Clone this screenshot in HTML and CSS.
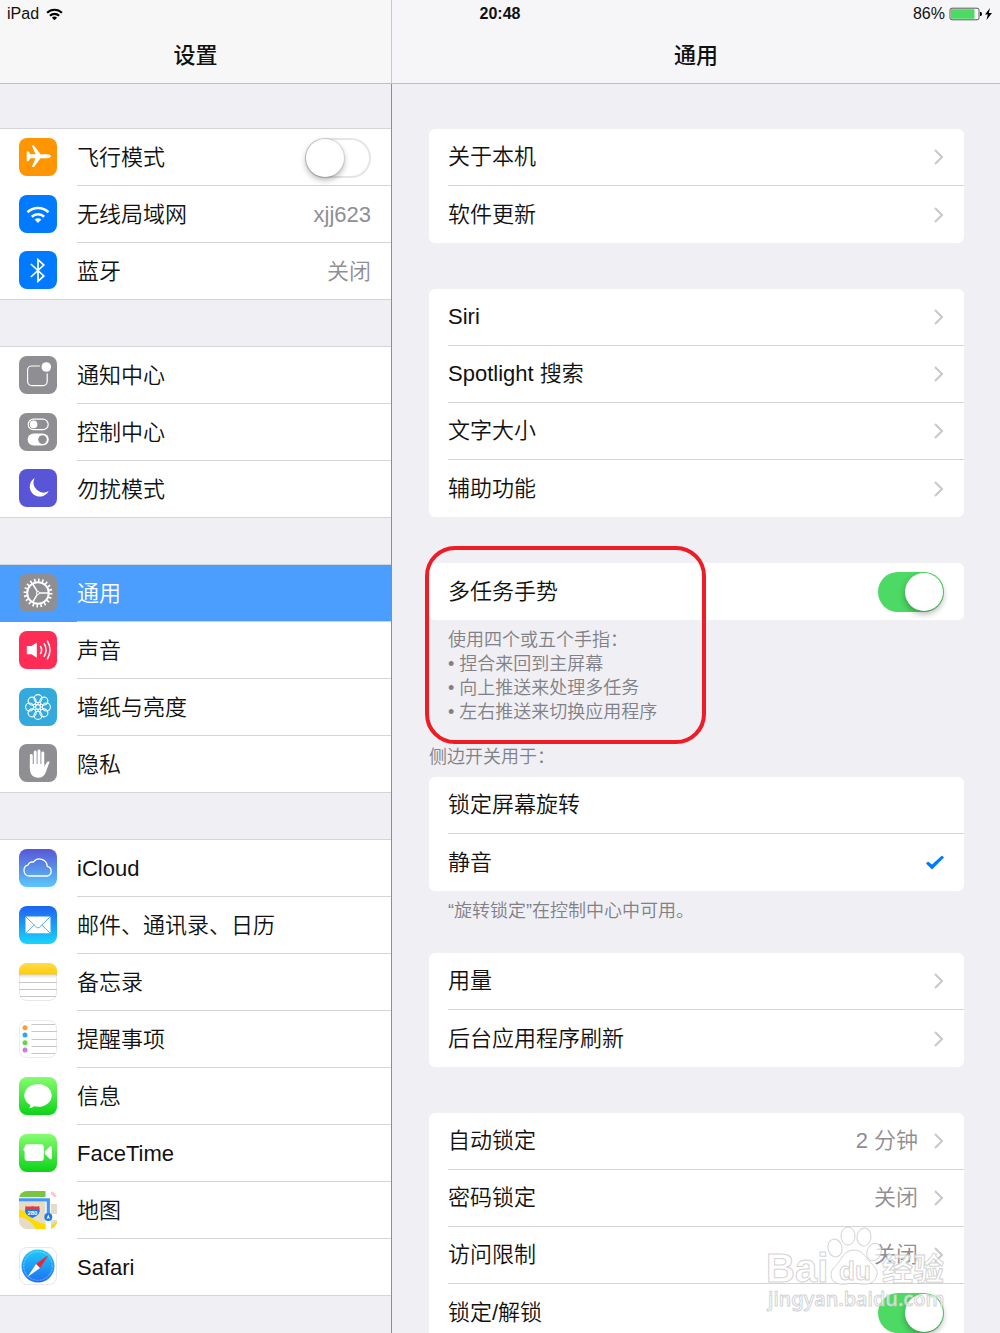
FILE: index.html
```html
<!DOCTYPE html>
<html lang="zh-CN">
<head>
<meta charset="utf-8">
<meta name="viewport" content="width=device-width, initial-scale=1">
<title>设置</title>
<link rel="stylesheet" href="styles.css">
</head>
<body>
<div class="app">
  <div class="status">
    <span class="carrier">iPad
      <svg class="status-wifi" viewBox="0 0 16 12" fill="none" stroke="#000" stroke-width="2"><path d="M1 4.4a10 10 0 0 1 14 0M3.700 7.200a6.100 6.100 0 0 1 8.600 0"/><path d="M5.600 9.100a3.500 3.500 0 0 1 4.800 0L8 11.500z" fill="#000" stroke="none"/></svg>
    </span>
    <time class="clock">20:48</time>
    <span class="power">86%
      <svg class="battery" viewBox="0 0 44 14"><rect x="1" y="1.200" width="29" height="11.600" rx="2" fill="#fff" stroke="#555"/><rect x="2" y="2.200" width="23.500" height="9.600" fill="#4cd964"/><path d="M31 5h.6q1.400 0 1.400 2t-1.400 2H31z"/><path d="M41 1L36 7.600h2.800L37.500 13 43 6h-3.200z"/></svg>
    </span>
  </div>

  <nav class="pane sidebar">
    <header class="bar"><h1>设置</h1></header>
    <div class="scroll">
      <section class="group">
        <label class="item">
          <svg class="icon" viewBox="0 0 38 38"><rect width="38" height="38" rx="8" fill="#ff9500"/><path d="M32 18.300c0 1.300-2 2-4 2h-6.500L15 29h-2.200l3.700-8.700h-5l-2 2.900H7.700v-9.800h1.800l2 2.900h5L12.800 7.600H15l6.500 8.700H28c2 0 4 .7 4 2z" fill="#fff"/></svg>
          <span class="cell"><span class="name">飞行模式</span><input class="switch" type="checkbox"></span>
        </label>
        <a class="item" href="#wifi">
          <svg class="icon" viewBox="0 0 38 38"><rect width="38" height="38" rx="8" fill="#007aff"/><path d="M8.500 17.300a15 15 0 0 1 21 0M12.800 21.800a9 9 0 0 1 12.400 0" fill="none" stroke="#fff" stroke-width="2.600"/><path d="M15.600 24.600q3.400-2.600 6.800 0L19 28z" fill="#fff"/></svg>
          <span class="cell"><span class="name">无线局域网</span><span class="value">xjj623</span></span>
        </a>
        <a class="item" href="#bluetooth">
          <svg class="icon" viewBox="0 0 38 38"><rect width="38" height="38" rx="8" fill="#007aff"/><path d="M11.800 13L24.800 25 19 30.300V8.700L24.800 14l-13 12" fill="none" stroke="#fff" stroke-width="1.700"/></svg>
          <span class="cell"><span class="name">蓝牙</span><span class="value">关闭</span></span>
        </a>
      </section>

      <section class="group">
        <a class="item" href="#notifications">
          <svg class="icon" viewBox="0 0 38 38"><rect width="38" height="38" rx="8" fill="#8e8e93"/><rect x="8.600" y="10" width="19.600" height="19.600" rx="4" fill="none" stroke="#fff" stroke-width="1.200"/><circle cx="27.300" cy="11" r="6.600" fill="#8e8e93"/><circle cx="27.300" cy="11" r="4.800" fill="#fff"/></svg>
          <span class="cell"><span class="name">通知中心</span></span>
        </a>
        <a class="item" href="#control">
          <svg class="icon" viewBox="0 0 38 38"><rect width="38" height="38" rx="8" fill="#8e8e93"/><rect x="9.200" y="6.200" width="20" height="10.400" rx="5.200" fill="none" stroke="#fff" stroke-width="1.200"/><circle cx="14.600" cy="11.400" r="3.800" fill="#fff"/><rect x="8.600" y="20.600" width="21.200" height="12" rx="6" fill="#fff"/><circle cx="23.500" cy="26.600" r="4.300" fill="#8e8e93"/></svg>
          <span class="cell"><span class="name">控制中心</span></span>
        </a>
        <a class="item" href="#dnd">
          <svg class="icon" viewBox="0 0 38 38"><rect width="38" height="38" rx="8" fill="#5856d6"/><path d="M15.600 9A10 10 0 1 0 29.700 22 10 10 0 0 1 15.600 9z" fill="#fff"/></svg>
          <span class="cell"><span class="name">勿扰模式</span></span>
        </a>
      </section>

      <section class="group">
        <a class="item selected" href="#general" aria-current="page">
          <svg class="icon" viewBox="0 0 38 38"><rect width="38" height="38" rx="8" fill="#8e8e93"/><g fill="none" stroke="#fff"><circle cx="19" cy="19" r="12.800" stroke-width="3.200" pathLength="60" stroke-dasharray="1.200 1.800"/><circle cx="19" cy="19" r="10.800" stroke-width="2"/><path d="M20.500 19H30M18.300 17.700l-4.800-8.200M18.300 20.300l-4.800 8.200" stroke-width="1.500"/><circle cx="19" cy="19" r="1.500" stroke-width="1"/></g></svg>
          <span class="cell"><span class="name">通用</span></span>
        </a>
        <a class="item" href="#sounds">
          <svg class="icon" viewBox="0 0 38 38"><rect width="38" height="38" rx="8" fill="#ff2d55"/><path d="M7.800 15h4.700l5.300-3.500v15.200L12.500 23.200H7.800z" fill="#fff"/><path d="M21.300 15q2.600 4 0 8M24.900 12.200q4.400 6.900 0 13.700M28.200 9.700q5.600 9.400 0 18.700" fill="none" stroke="#fff" stroke-width="1.500"/></svg>
          <span class="cell"><span class="name">声音</span></span>
        </a>
        <a class="item" href="#wallpaper">
          <svg class="icon" viewBox="0 0 38 38"><rect width="38" height="38" rx="8" fill="#34aadc"/><g fill="none" stroke="#fff" stroke-width="1.100"><circle cx="19" cy="10.600" r="4"/><circle cx="24.900" cy="13.100" r="4"/><circle cx="27.400" cy="19" r="4"/><circle cx="24.900" cy="24.900" r="4"/><circle cx="19" cy="27.400" r="4"/><circle cx="13.100" cy="24.900" r="4"/><circle cx="10.600" cy="19" r="4"/><circle cx="13.100" cy="13.100" r="4"/><circle cx="19" cy="19" r="2.400"/><path d="M19 14.600v2M19 21.400v2M14.600 19h2M21.400 19h2M15.900 15.900l1.400 1.400M20.700 20.700l1.400 1.400M15.900 22.100l1.400-1.400M20.700 17.300l1.400-1.400"/></g></svg>
          <span class="cell"><span class="name">墙纸与亮度</span></span>
        </a>
        <a class="item" href="#privacy">
          <svg class="icon" viewBox="0 0 38 38"><rect width="38" height="38" rx="8" fill="#8e8e93"/><path d="M12.300 11.500V24M16.200 8V21M20 7v14M23.800 9v13" stroke="#fff" stroke-width="2.900" stroke-linecap="round"/><path d="M10.900 20h14.300v2.500l2.300-3.600c1-1.500 2.400-1.600 3.200-.9-1.500 2.600-2.300 6.500-4 10.500-1.400 3.500-3.900 5.200-7.600 5.200-5.200 0-8.200-3.500-8.200-8.700z" fill="#fff"/></svg>
          <span class="cell"><span class="name">隐私</span></span>
        </a>
      </section>

      <section class="group">
        <a class="item" href="#icloud">
          <svg class="icon" viewBox="0 0 38 38"><defs><linearGradient id="g-cloud" x2="0" y2="1"><stop stop-color="#5856d6"/><stop offset="1" stop-color="#5ac8fa"/></linearGradient></defs><rect width="38" height="38" rx="8" fill="url(#g-cloud)"/><path d="M10.500 27a5.700 5.700 0 0 1-1.300-11.200 4 4 0 0 1 5.100-2.600 7.700 7.700 0 0 1 13.900 4.100A5 5 0 0 1 28.500 27z" fill="none" stroke="#fff" stroke-width="1.300"/></svg>
          <span class="cell"><span class="name">iCloud</span></span>
        </a>
        <a class="item" href="#mail">
          <svg class="icon" viewBox="0 0 38 38"><defs><linearGradient id="g-mail" x2="0" y2="1"><stop stop-color="#1d62f0"/><stop offset="1" stop-color="#19d5fd"/></linearGradient></defs><rect width="38" height="38" rx="8" fill="url(#g-mail)"/><rect x="6.500" y="10.600" width="25" height="16.600" rx="1" fill="#fff"/><path d="M7 11l10.500 10.300q1.500 1.300 3 0L31 11M7 27l8.200-8M31 27l-8.200-8" fill="none" stroke="#4aa5f5" stroke-width=".9"/></svg>
          <span class="cell"><span class="name">邮件、通讯录、日历</span></span>
        </a>
        <a class="item" href="#notes">
          <svg class="icon" viewBox="0 0 38 38"><defs><linearGradient id="g-notes" x2="0" y2="1"><stop stop-color="#ffdb4c"/><stop offset="1" stop-color="#ffcd02"/></linearGradient></defs><rect x=".5" y=".5" width="37" height="37" rx="7.500" fill="#fff" stroke="#e8e8e8"/><path d="M0 11.500V8a8 8 0 0 1 8-8h22a8 8 0 0 1 8 8v3.500z" fill="url(#g-notes)"/><path d="M0 11.500h38v1H0z" fill="#c9b98a"/><path d="M.5 12.500h37v2H.5z" fill="#eee"/><path d="M0 19.500h38M0 26.500h38M1 33.500h36" stroke="#c7c7c7"/></svg>
          <span class="cell"><span class="name">备忘录</span></span>
        </a>
        <a class="item" href="#reminders">
          <svg class="icon" viewBox="0 0 38 38"><rect x=".5" y=".5" width="37" height="37" rx="7.500" fill="#fff" stroke="#ebebeb"/><path d="M12.500 4.500H36M12.500 11.500H38M12.500 19.500H38M12.500 26.500H38M12.500 33.500H36" stroke="#c7c7c7"/><circle cx="6" cy="7.700" r="2.500" fill="#ff9d2a"/><circle cx="6" cy="15" r="2.500" fill="#2ea9ee"/><circle cx="6" cy="22.700" r="2.500" fill="#62d944"/><circle cx="6" cy="29.900" r="2.500" fill="#cb7be6"/></svg>
          <span class="cell"><span class="name">提醒事项</span></span>
        </a>
        <a class="item" href="#messages">
          <svg class="icon" viewBox="0 0 38 38"><defs><linearGradient id="g-green" x2="0" y2="1"><stop stop-color="#87fc70"/><stop offset="1" stop-color="#0bd318"/></linearGradient></defs><rect width="38" height="38" rx="8" fill="url(#g-green)"/><path d="M19 7c7.600 0 13.700 5 13.700 11.400S26.600 29.800 19 29.800c-1.400 0-2.800-.2-4-.5-1.300 1.200-3 1.900-5.200 2 1-.8 1.500-1.900 1.600-3.300-3.700-2-6.100-5.500-6.100-9.600C5.300 12 11.400 7 19 7z" fill="#fff"/></svg>
          <span class="cell"><span class="name">信息</span></span>
        </a>
        <a class="item" href="#facetime">
          <svg class="icon" viewBox="0 0 38 38"><rect width="38" height="38" rx="8" fill="url(#g-green)"/><rect x="5.600" y="10.300" width="19.200" height="16.700" rx="3" fill="#fff"/><path d="M25.800 17.600l5-5q2-1 2 .8v10.800q0 1.800-2 .8l-5-5z" fill="#fff"/><rect x="4.500" y="14" width="2" height="3" rx="1" fill="#fff"/></svg>
          <span class="cell"><span class="name">FaceTime</span></span>
        </a>
        <a class="item" href="#maps">
          <svg class="icon" viewBox="0 0 38 38"><defs><clipPath id="c-map"><rect width="38" height="38" rx="8"/></clipPath></defs><g clip-path="url(#c-map)"><path d="M0 0h38v38H0z" fill="#fff"/><path d="M0 0h26.500v6H0z" fill="#76c63f"/><path d="M32 0h6v6h-3l-3-3z" fill="#f8c5d3"/><path d="M0 11h26.500v27H0zM32 13h6v10h-6zM32 29h6v9h-6z" fill="#e5dcc8"/><path d="M0 19q7 0 11 6t15.500 8v5H17Q9 26 0 26z" fill="#ffdb00"/><path d="M32 35l6-5v4l-6 4z" fill="#ffdb00"/><path d="M0 8.800h29.300v17" fill="none" stroke="#4196ff" stroke-width="3.200"/><circle cx="29.300" cy="26" r="4" fill="#1a7cec"/><path d="M29.300 23.200l1.700 4.800-1.700-1-1.700 1z" fill="#fff"/><path d="M6.500 16.500h13.800q2.500 7-6.900 10.500-9.400-3.500-6.900-10.500z" fill="#1a7cec"/><path d="M6.500 18v-3q3.500 1.200 6.900 0 3.400 1.200 6.900 0v3z" fill="#e33b3d"/><text x="13.400" y="23.600" class="route">280</text></g></svg>
          <span class="cell"><span class="name">地图</span></span>
        </a>
        <a class="item" href="#safari">
          <svg class="icon" viewBox="0 0 38 38"><defs><linearGradient id="g-safari" x2="0" y2="1"><stop stop-color="#1fcbfb"/><stop offset="1" stop-color="#1d6ff1"/></linearGradient></defs><rect x=".5" y=".5" width="37" height="37" rx="7.500" fill="#fff" stroke="#e8e8e8"/><circle cx="19" cy="19" r="16.500" fill="url(#g-safari)"/><circle cx="19" cy="19" r="14.300" fill="none" stroke="#fff" stroke-opacity=".5" stroke-width="1.300" stroke-dasharray=".6 .9"/><path d="M29.500 8L17 17l4 4z" fill="#f5222d"/><path d="M8.500 30L17 17l4 4z" fill="#fff"/></svg>
          <span class="cell"><span class="name">Safari</span></span>
        </a>
      </section>
    </div>
  </nav>

  <main class="pane detail">
    <header class="bar"><h2>通用</h2></header>
    <div class="scroll">
      <section class="card">
        <a class="row" href="#about"><span class="name">关于本机</span><svg class="chevron" viewBox="0 0 11 18"><path d="M2 2l7 7-7 7"/></svg></a>
        <a class="row" href="#update"><span class="name">软件更新</span><svg class="chevron" viewBox="0 0 11 18"><path d="M2 2l7 7-7 7"/></svg></a>
      </section>

      <section class="card">
        <a class="row" href="#siri"><span class="name">Siri</span><svg class="chevron" viewBox="0 0 11 18"><path d="M2 2l7 7-7 7"/></svg></a>
        <a class="row" href="#spotlight"><span class="name">Spotlight 搜索</span><svg class="chevron" viewBox="0 0 11 18"><path d="M2 2l7 7-7 7"/></svg></a>
        <a class="row" href="#text"><span class="name">文字大小</span><svg class="chevron" viewBox="0 0 11 18"><path d="M2 2l7 7-7 7"/></svg></a>
        <a class="row" href="#accessibility"><span class="name">辅助功能</span><svg class="chevron" viewBox="0 0 11 18"><path d="M2 2l7 7-7 7"/></svg></a>
      </section>

      <div class="gestures">
        <section class="card">
          <label class="row"><span class="name">多任务手势</span><input class="switch" type="checkbox" checked></label>
        </section>
        <div class="note">
          <p>使用四个或五个手指：</p>
          <ul>
            <li>捏合来回到主屏幕</li>
            <li>向上推送来处理多任务</li>
            <li>左右推送来切换应用程序</li>
          </ul>
        </div>
        <div class="highlight"></div>
      </div>

      <fieldset class="side-switch">
        <legend>侧边开关用于：</legend>
        <div class="card">
          <label class="row"><span class="name">锁定屏幕旋转</span><input class="tick" type="radio" name="side"></label>
          <label class="row"><span class="name">静音</span><input class="tick" type="radio" name="side" checked></label>
        </div>
        <p class="note">“旋转锁定”在控制中心中可用。</p>
      </fieldset>

      <section class="card">
        <a class="row" href="#usage"><span class="name">用量</span><svg class="chevron" viewBox="0 0 11 18"><path d="M2 2l7 7-7 7"/></svg></a>
        <a class="row" href="#refresh"><span class="name">后台应用程序刷新</span><svg class="chevron" viewBox="0 0 11 18"><path d="M2 2l7 7-7 7"/></svg></a>
      </section>

      <section class="card">
        <a class="row" href="#autolock"><span class="name">自动锁定</span><span class="value">2 分钟</span><svg class="chevron" viewBox="0 0 11 18"><path d="M2 2l7 7-7 7"/></svg></a>
        <a class="row" href="#passcode"><span class="name">密码锁定</span><span class="value">关闭</span><svg class="chevron" viewBox="0 0 11 18"><path d="M2 2l7 7-7 7"/></svg></a>
        <a class="row" href="#restrictions"><span class="name">访问限制</span><span class="value">关闭</span><svg class="chevron" viewBox="0 0 11 18"><path d="M2 2l7 7-7 7"/></svg></a>
        <label class="row"><span class="name">锁定/解锁</span><input class="switch" type="checkbox" checked></label>
      </section>
    </div>
  </main>

  <svg class="watermark" viewBox="0 0 184 92">
    <g class="mark">
      <text x="2" y="57" class="mark-logo">Bai</text>
      <ellipse cx="71" cy="23" rx="7" ry="9" transform="rotate(-12 71 23)"/>
      <ellipse cx="84" cy="11" rx="7" ry="9"/>
      <ellipse cx="100" cy="12" rx="7" ry="9" transform="rotate(8 100 12)"/>
      <ellipse cx="110" cy="27" rx="7" ry="9" transform="rotate(20 110 27)"/>
      <path d="M90 25c8 0 11 6 16 12 5 5 8 8 7 13-2 8-9 10-15 9-5-1-11-1-16 0-7 1-15-1-15-9 0-6 5-9 8-13 4-6 7-12 15-12z"/>
      <text x="75" y="55" class="mark-du">du</text>
      <text x="118" y="55" class="mark-cjk">经验</text>
      <text x="4" y="81" class="mark-url">jingyan.baidu.com</text>
    </g>
  </svg>
</div>
</body>
</html>
```
FILE: styles.css
```css
* {
  box-sizing: border-box;
}

body {
  margin: 0;
  background: #efeff4;
  color: #111;
  font-family: "Liberation Sans", "Noto Sans CJK SC", sans-serif;
  font-size: 22px;
  font-weight: 350;
  line-height: 32px;
}

h1, h2, p, ul, fieldset {
  margin: 0;
  padding: 0;
  border: 0;
}

a {
  color: inherit;
  text-decoration: none;
}

.app {
  position: relative;
  display: grid;
  grid-template-columns: 392px 1fr;
  height: 100vh;
  overflow: hidden;
}

/* status bar floats over both panes */
.status {
  position: absolute;
  inset: 0 0 auto;
  display: grid;
  grid-template-columns: 1fr auto 1fr;
  align-items: center;
  padding: 0 7px;
  font-size: 16px;
  line-height: 28px;
}

.carrier,
.power {
  display: flex;
  align-items: center;
  gap: 7px;
}

.power {
  justify-content: flex-end;
  gap: 4px;
}

.clock {
  font-weight: 700;
}

.status-wifi {
  width: 17px;
  height: 13px;
}

.battery {
  width: 44px;
  height: 14px;
}

.pane {
  display: flex;
  flex-direction: column;
  min-width: 0;
  min-height: 0;
}

.bar {
  flex: none;
  padding: 40px 0 11px;
  border-bottom: 1px solid #bfbfc2;
  background: #f7f7f7;
  text-align: center;
}

.detail .bar {
  background: #f6f6f8;
}

.bar h1,
.bar h2 {
  font-size: 22px;
  font-weight: 500;
}

.scroll {
  display: flex;
  flex: 1;
  flex-direction: column;
  gap: 46px;
  min-height: 0;
  padding: 44px 0;
  overflow-y: auto;
  scrollbar-width: none;
}

.sidebar .bar {
  border-right: 1px solid #c8c8ca;
}

.sidebar .scroll {
  border-right: 1px solid #8e8e92;
}

.detail .scroll {
  padding: 45px 36px 45px 37px;
}

.scroll > * {
  flex: none;
}

.group {
  border-top: 1px solid #d4d4d8;
  background: #fff;
}

.item {
  display: flex;
  align-items: center;
  gap: 20px;
  height: 57px;
  padding-left: 19px;
}

.item:last-child {
  border-bottom: 1px solid #d4d4d8;
}

.icon {
  flex: none;
  width: 38px;
  height: 38px;
  margin-bottom: 2px;
}

.cell {
  display: flex;
  flex: 1;
  align-items: center;
  align-self: stretch;
  padding: 1px 20px 0 0;
  border-bottom: 1px solid #d4d4d8;
}

.item:last-child .cell {
  border-bottom: 0;
}

.selected {
  background: #4b9efd;
  color: #fff;
}

.name {
  flex: 1;
}

.value {
  color: #8e8e93;
}

.route {
  fill: #fff;
  font-size: 6px;
  font-weight: 700;
  text-anchor: middle;
}

.card {
  border-radius: 6px;
  background: #fff;
}

.row {
  display: flex;
  align-items: center;
  gap: 15px;
  height: 57px;
  margin-left: 19px;
  padding-right: 20px;
  border-bottom: 1px solid #d4d4d8;
}

.row:last-child {
  border-bottom: 0;
}

.chevron {
  width: 11px;
  height: 18px;
  fill: none;
  stroke: #c7c7cc;
  stroke-width: 2;
}

.switch {
  flex: none;
  width: 66px;
  height: 40px;
  margin: 0;
  padding: 1px;
  border-radius: 20px;
  background: #fff;
  box-shadow: inset 0 0 0 2px #e5e5e5;
  appearance: none;
}

.switch::before {
  display: block;
  width: 38px;
  height: 38px;
  border-radius: 50%;
  background: #fff;
  box-shadow: 0 0 1px 1px rgba(0, 0, 0, 0.1), 0 3px 6px rgba(0, 0, 0, 0.3);
  content: "";
}

.switch:checked {
  background: #4cd964;
  box-shadow: none;
}

.switch:checked::before {
  margin-left: auto;
  box-shadow: 0 3px 6px rgba(0, 0, 0, 0.3);
}

.tick {
  width: 18px;
  height: 14px;
  margin: 0;
  appearance: none;
}

.tick:checked {
  background: #007aff;
  clip-path: polygon(0 8px, 2px 6px, 6px 9px, 16px 0, 18px 2px, 6px 14px);
}

.note,
.side-switch legend {
  color: #808086;
  font-size: 18px;
  line-height: 24px;
}

.note {
  padding: 8px 19px 0;
}

.note ul {
  list-style: none;
}

.note li::before {
  content: "• ";
}

.gestures {
  position: relative;
}

/* ring drawn around the gesture setting */
.highlight {
  position: absolute;
  top: -17px;
  left: -4px;
  width: 281px;
  height: 198px;
  border: 4px solid #ee1c25;
  border-radius: 30px;
  pointer-events: none;
}

.side-switch {
  margin: -25px 0 -16px;
}

.side-switch legend {
  padding: 0 0 8px;
}

.watermark {
  position: absolute;
  right: 52px;
  bottom: 16px;
  width: 184px;
  height: 92px;
  overflow: visible;
  pointer-events: none;
}

.mark {
  fill: #fff;
  fill-opacity: 0.7;
  stroke: #c8c8c8;
  stroke-opacity: 0.8;
  font-family: "Liberation Sans", "Noto Sans CJK SC", sans-serif;
  font-weight: 700;
}

.mark-logo {
  font-size: 40px;
}

.mark-du {
  font-size: 26px;
}

.mark-cjk {
  font-size: 31px;
}

.mark-url {
  font-family: "Noto Sans", sans-serif;
  font-size: 20px;
  font-weight: 500;
}
```
